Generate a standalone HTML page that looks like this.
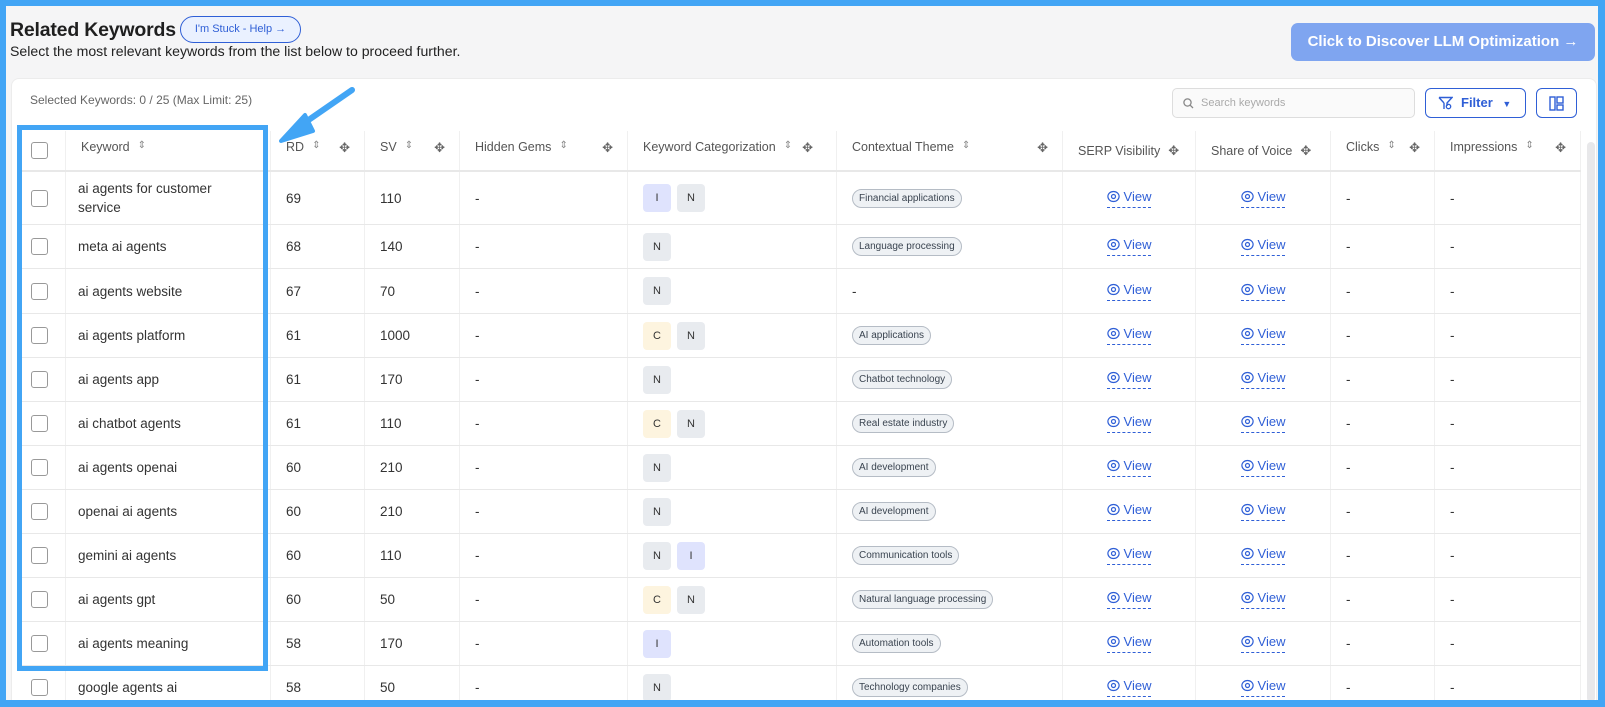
<!DOCTYPE html><html><head><meta charset="utf-8"><style>
*{box-sizing:border-box;margin:0;padding:0}
html{width:1605px;height:707px;overflow:hidden}
body{width:1605px;height:707px;overflow:hidden;background:#42a5f5;font-family:"Liberation Sans",sans-serif;color:#333;position:relative}
.page{position:absolute;left:6px;top:6px;width:1592px;height:694px;background:#f5f5f6;overflow:hidden}
.t{position:absolute;left:4px;top:13px;font-size:19.5px;font-weight:bold;color:#1f1f1f;letter-spacing:-0.2px}
.help{position:absolute;left:174px;top:10px;height:27px;width:121px;border:1px solid #2f5fd6;border-radius:14px;background:#eaf1ff;color:#2f5fd6;font-size:11px;line-height:25px;text-align:center}
.sub{position:absolute;left:4px;top:37px;font-size:14.1px;color:#222}
.llm{position:absolute;left:1285px;top:17px;width:304px;height:38px;border-radius:7px;background:#7fa5f0;color:#fff;font-size:15px;font-weight:bold;line-height:38px;text-align:center;white-space:nowrap;overflow:hidden}
.clip{position:absolute;left:0;top:0;width:1598px;height:700px;overflow:hidden}
.card{position:absolute;left:11px;top:78px;width:1586px;height:640px;background:#fff;border-radius:8px;border:1px solid #ececec}
.sel{position:absolute;left:30px;top:93px;font-size:12px;color:#666}
.search{position:absolute;left:1172px;top:88px;width:243px;height:30px;border:1px solid #ddd;border-radius:5px;background:#fafafa;font-size:11px;color:#aaa;line-height:28px;padding-left:28px}
.filter{position:absolute;left:1425px;top:88px;width:101px;height:30px;border:1.5px solid #2f5fd6;border-radius:6px;color:#2f5fd6;font-size:13px;font-weight:bold;line-height:27px;padding-left:35px}
.lay{position:absolute;left:1536px;top:88px;width:41px;height:30px;border:1.5px solid #2f5fd6;border-radius:6px}
.row{position:absolute;left:17px;display:flex;border-bottom:1px solid #e8e8e8;font-size:13.5px;color:#333}
.row>div{border-right:1px solid #f0f0f0;display:flex;align-items:center;padding-left:15px;height:100%}
.hd{color:#555;font-size:12.5px;border-bottom:2px solid #e8e8e8}
.cb{width:17px;height:17px;border:1px solid #999;border-radius:3px;background:#fff}
.b{display:inline-block;width:28px;height:28px;border-radius:4px;background:#e8ebef;font-size:11px;line-height:28px;text-align:center;margin-right:6px;color:#333}
.bi{background:#dfe3fd}.bc{background:#fdf4df}
.pill{border:1px solid #b5bcc5;background:#eef1f4;border-radius:10px;font-size:10px;padding:3px 6px;color:#3a4450}
.v{color:#2f5fd6;font-size:13px;border-bottom:1px dashed #2f5fd6;padding-bottom:3px;display:inline-flex;align-items:center;gap:4px}
.c{justify-content:center;padding-left:0!important}
.ic{color:#888;font-size:10px;margin-left:8px}
.mv{color:#666;font-size:13px;margin-left:auto;margin-right:14px}
.hl{position:absolute;left:17px;top:125px;width:251px;height:546px;border:5px solid #42a5f5}
.sb{position:absolute;left:1587px;top:142px;width:8px;height:560px;background:#e8e8ea;border-radius:4px}
</style></head><body><div class="page">
<div class="t">Related Keywords</div><div class="help">I'm Stuck - Help →</div>
<div class="sub">Select the most relevant keywords from the list below to proceed further.</div>
<div class="llm">Click to Discover LLM Optimization →</div>
</div>
<div class="clip">
<div class="card"></div>
<div class="sel">Selected Keywords: 0 / 25 (Max Limit: 25)</div>
<div class="search"><svg style="position:absolute;left:10px;top:9px" width="11" height="11" viewBox="0 0 11 11"><circle cx="4.5" cy="4.5" r="3.6" fill="none" stroke="#888" stroke-width="1.3"/><path d="M7.3 7.3L10 10" stroke="#888" stroke-width="1.3"/></svg>Search keywords</div>
<div class="filter"><svg style="position:absolute;left:12px;top:7px" width="15" height="15" viewBox="0 0 15 15"><path d="M1 1.5h13l-5 5.5v3M6 7L1 1.5M6 7v6" fill="none" stroke="#2f5fd6" stroke-width="1.4"/><circle cx="10.5" cy="10.5" r="2.2" fill="none" stroke="#2f5fd6" stroke-width="1.3"/></svg>Filter <span style="font-size:9px;margin-left:6px">▼</span></div>
<div class="lay"><svg style="position:absolute;left:12px;top:7px" width="15" height="15" viewBox="0 0 15 15"><rect x="1" y="1" width="5" height="13" fill="none" stroke="#2f5fd6" stroke-width="1.4"/><rect x="8" y="1" width="6" height="6" fill="none" stroke="#2f5fd6" stroke-width="1.4"/><rect x="8" y="9" width="6" height="5" fill="none" stroke="#2f5fd6" stroke-width="1.4"/></svg></div>
<div class="sb"></div>
<div id="rows"></div>
<div class="hl"></div>
<svg style="position:absolute;left:0;top:0" width="1598" height="700"><path d="M352 90L297 128" stroke="#42a5f5" stroke-width="6" stroke-linecap="round"/><path d="M281 141L305 115L313 131Z" fill="#42a5f5" stroke="#42a5f5" stroke-width="4" stroke-linejoin="round"/></svg>
</div>
<script>
const W=[49,205,94,95,168,209,226,133,135,104,146];
const eye='<svg width="13" height="13" viewBox="0 0 13 13"><ellipse cx="6.5" cy="6.5" rx="5.6" ry="5" fill="none" stroke="#2f5fd6" stroke-width="1.2"/><circle cx="6.5" cy="6.5" r="2" fill="none" stroke="#2f5fd6" stroke-width="1.2"/></svg>';
const D=[["ai agents for customer service",69,110,"IN","Financial applications"],["meta ai agents",68,140,"N","Language processing"],["ai agents website",67,70,"N",""],["ai agents platform",61,1000,"CN","AI applications"],["ai agents app",61,170,"N","Chatbot technology"],["ai chatbot agents",61,110,"CN","Real estate industry"],["ai agents openai",60,210,"N","AI development"],["openai ai agents",60,210,"N","AI development"],["gemini ai agents",60,110,"NI","Communication tools"],["ai agents gpt",60,50,"CN","Natural language processing"],["ai agents meaning",58,170,"I","Automation tools"],["google agents ai",58,50,"N","Technology companies"]];
let h='';const mv='<span class="mv">✥</span>',s='<span class="ic">⇕</span>';
const hd=['<span class="cb"></span>','<span style="margin-left:3px">Keyword</span>'+s,'RD'+s+mv,'SV'+s+mv,'Hidden Gems'+s+mv,'Keyword Categorization'+s+'<span class="mv" style="margin-left:10px">✥</span>','Contextual Theme'+s+mv,'SERP Visibility<span class="mv" style="margin-left:8px">✥</span>','Share of Voice<span class="mv" style="margin-left:8px">✥</span>','Clicks'+s+mv,'Impressions'+s+mv];
function row(top,ht,cells,cls){let r='<div class="row '+(cls||'')+'" style="top:'+top+'px;height:'+ht+'px">';cells.forEach((c,i)=>{r+='<div class="'+((i==7||i==8)&&cls!='hd'?'c':'')+'" style="width:'+W[i]+'px;'+(i==0?'padding-left:14px;':'')+(i==1?'padding-left:12px;':'')+(cls=='hd'&&i!=7&&i!=8&&i>0?'align-items:flex-start;padding-top:9px;':'')+'">'+c+'</div>'});return r+'</div>';}
h+=row(131,41,hd,'hd');
let tops=[172,225,269,314,358,402,446,490,534,578,622,666];
D.forEach((d,i)=>{const ht=(tops[i+1]||710)-tops[i];
let b=d[3].split('').map(x=>'<span class="b '+(x=='I'?'bi':x=='C'?'bc':'')+'">'+x+'</span>').join('');
h+=row(tops[i],ht,['<span class="cb"></span>','<span style="line-height:19px;max-width:150px">'+d[0]+'</span>',d[1],d[2],'-',b,d[4]?'<span class="pill">'+d[4]+'</span>':'-','<span class="v">'+eye+'View</span>','<span class="v">'+eye+'View</span>','-','-']);});
document.getElementById('rows').innerHTML=h;
</script>
</body></html>
